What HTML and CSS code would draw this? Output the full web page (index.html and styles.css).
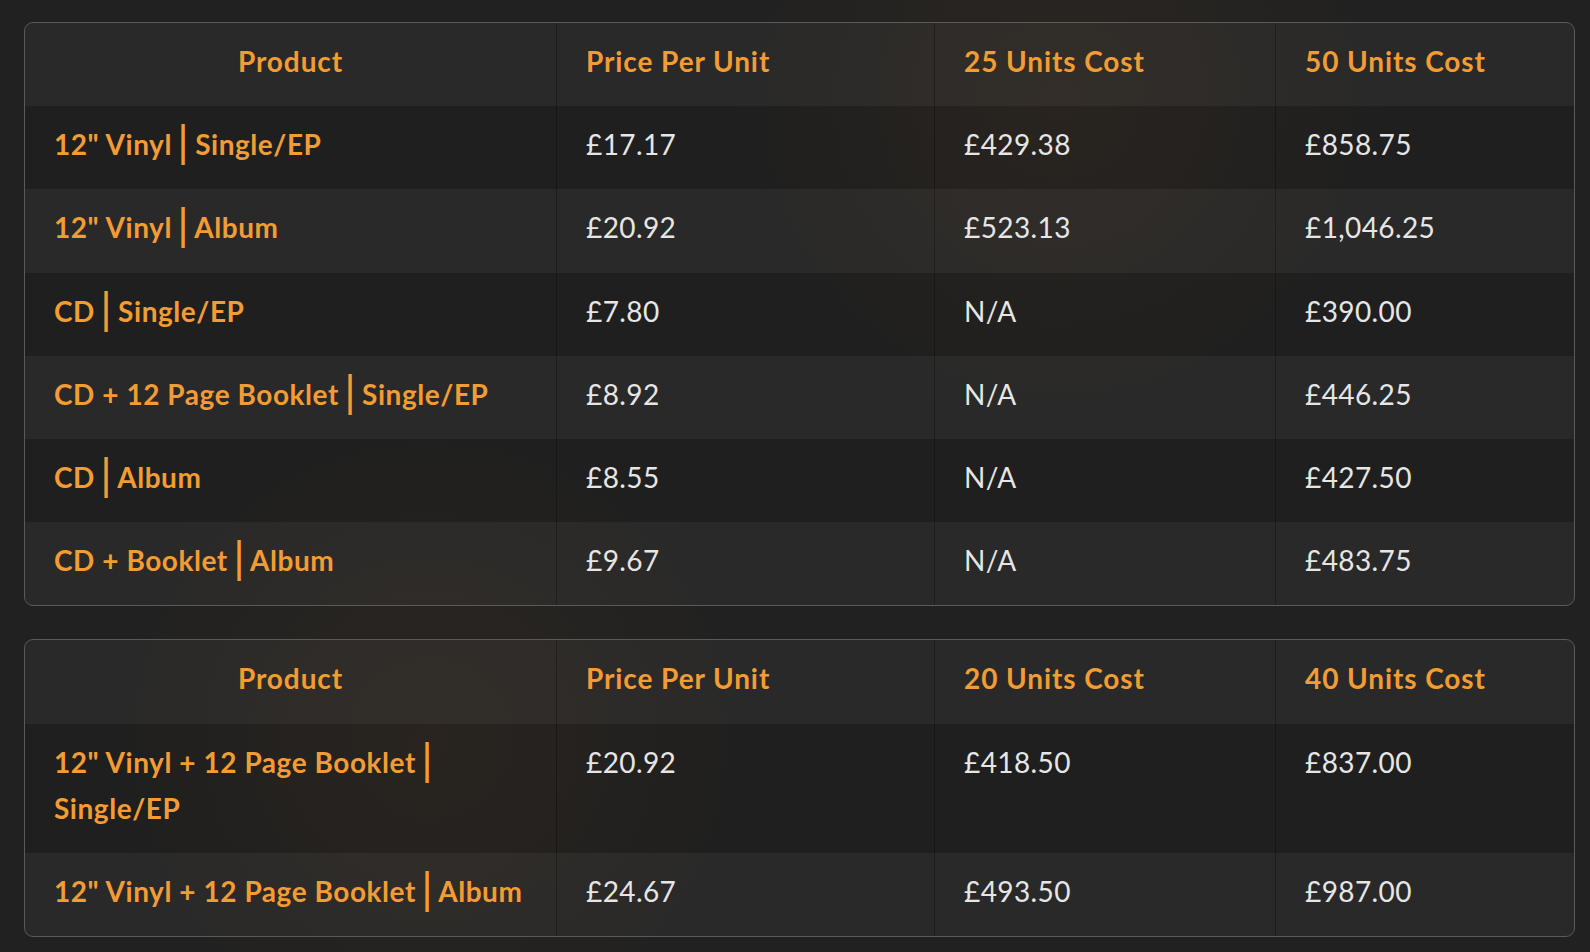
FILE: index.html
```html
<!DOCTYPE html>
<html lang="en">
<head>
<meta charset="utf-8">
<title>Pricing</title>
<link rel="stylesheet" href="styles.css">
</head>
<body>
<main class="page">
  <table class="prices">
    <colgroup><col class="c1"><col class="c2"><col class="c3"><col class="c4"></colgroup>
    <thead>
      <tr><th class="center">Product</th><th>Price Per Unit</th><th>25 Units Cost</th><th>50 Units Cost</th></tr>
    </thead>
    <tbody>
      <tr class="dark"><td class="prod">12" Vinyl <span class="sep">|</span> Single/EP</td><td>£17.17</td><td>£429.38</td><td>£858.75</td></tr>
      <tr class="light"><td class="prod">12" Vinyl <span class="sep">|</span> Album</td><td>£20.92</td><td>£523.13</td><td>£1,046.25</td></tr>
      <tr class="dark"><td class="prod">CD <span class="sep">|</span> Single/EP</td><td>£7.80</td><td>N/A</td><td>£390.00</td></tr>
      <tr class="light"><td class="prod">CD + 12 Page Booklet <span class="sep">|</span> Single/EP</td><td>£8.92</td><td>N/A</td><td>£446.25</td></tr>
      <tr class="dark"><td class="prod">CD <span class="sep">|</span> Album</td><td>£8.55</td><td>N/A</td><td>£427.50</td></tr>
      <tr class="light"><td class="prod">CD + Booklet <span class="sep">|</span> Album</td><td>£9.67</td><td>N/A</td><td>£483.75</td></tr>
    </tbody>
  </table>

  <table class="prices">
    <colgroup><col class="c1"><col class="c2"><col class="c3"><col class="c4"></colgroup>
    <thead>
      <tr><th class="center">Product</th><th>Price Per Unit</th><th>20 Units Cost</th><th>40 Units Cost</th></tr>
    </thead>
    <tbody>
      <tr class="dark"><td class="prod">12" Vinyl + 12 Page Booklet <span class="sep">|</span> Single/EP</td><td>£20.92</td><td>£418.50</td><td>£837.00</td></tr>
      <tr class="light"><td class="prod">12" Vinyl + 12 Page Booklet <span class="sep">|</span> Album</td><td>£24.67</td><td>£493.50</td><td>£987.00</td></tr>
    </tbody>
  </table>
</main>
</body>
</html>
```
FILE: styles.css
```css
html, body {
  margin: 0;
  padding: 0;
}
body {
  min-height: 952px;
  background-color: #212121;
  background-image:
    radial-gradient(circle at 1060px 100px, rgba(110, 70, 30, 0.13), rgba(110, 70, 30, 0) 330px),
    radial-gradient(circle at 430px 740px, rgba(110, 70, 30, 0.13), rgba(110, 70, 30, 0) 330px);
  font-family: Lato, "Liberation Sans", sans-serif;
  font-size: 28px;
  line-height: 46px;
}
.page {
  display: flex;
  flex-direction: column;
  gap: 33px;
  padding: 22px 15px 0 24px;
}
.prices {
  width: 1551px;
  table-layout: fixed;
  border-collapse: separate;
  border-spacing: 0;
  border: 1px solid #5a5a5a;
  border-radius: 9px;
  overflow: hidden;
}
.c1 { width: 531px; }
.c2 { width: 378px; }
.c3 { width: 341px; }
.c4 { width: auto; }

th, td {
  padding: 15px 29px 22.2px;
  text-align: left;
  vertical-align: top;
  letter-spacing: 0.4px;
}
th + th, td + td {
  border-left: 1px solid rgba(0, 0, 0, 0.28);
}
th {
  font-weight: 700;
  color: #f39c33;
  background: rgba(255, 255, 255, 0.04);
  letter-spacing: 0.9px;
}
th.center {
  text-align: center;
}
td {
  color: #e6e6e6;
  font-weight: 400;
}
td.prod {
  color: #f39c33;
  font-weight: 700;
  letter-spacing: 0.55px;
}
.light td {
  background: rgba(255, 255, 255, 0.04);
}
.dark td {
  background: rgba(0, 0, 0, 0.03);
}
.sep {
  font-family: "DejaVu Sans", sans-serif;
  font-weight: 400;
  font-size: 40px;
  line-height: 1px;
  letter-spacing: 0;
  margin: 0 -2px 0 -3px;
}
```
